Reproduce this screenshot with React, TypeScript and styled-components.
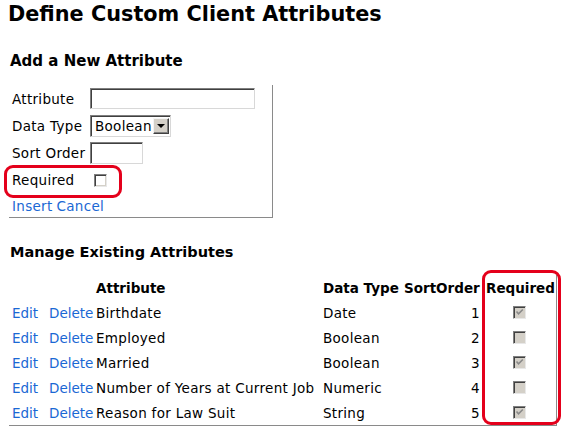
import React from "react";
import styled, { createGlobalStyle } from "styled-components";

const Global = createGlobalStyle`
  html, body { margin: 0; padding: 0; background: #fff; }
  body { font-family: "DejaVu Sans", Verdana, sans-serif; font-size: 13.5px; letter-spacing: 0.3px; color: #000; }
`;

const Page = styled.div`
  padding: 0 0 0 9px;
  width: 566px;
  height: 429px;
  box-sizing: border-box;
  overflow: hidden;
`;

const Title = styled.h1`
  margin: 0 0 0 -1px;
  padding-top: 2px;
  font-size: 20.8px;
  line-height: 24px;
  font-weight: bold;
  letter-spacing: 0;
`;

const SubTitle = styled.h3<{ $size: number; $top: number }>`
  margin: ${(p) => p.$top}px 0 0 1px;
  font-size: ${(p) => p.$size}px;
  line-height: 18px;
  font-weight: bold;
  letter-spacing: 0;
`;

const FormBox = styled.div`
  position: relative;
  margin-top: 15px;
  width: 264px;
  box-sizing: border-box;
  border-right: 1px solid #8a8a8a;
  border-bottom: 1px solid #8a8a8a;
  display: flex;
  flex-direction: column;
`;

const FormRow = styled.div<{ $h: number }>`
  display: flex;
  align-items: center;
  height: ${(p) => p.$h}px;
`;

const Label = styled.span`
  width: 78px;
  padding-left: 3px;
  white-space: nowrap;
`;

const TextBox = styled.div<{ $w: number; $h: number }>`
  width: ${(p) => p.$w}px;
  height: ${(p) => p.$h}px;
  box-sizing: border-box;
  background: #fff;
  border-style: solid;
  border-width: 1px;
  border-color: #7f7f7f #d8d8d8 #d8d8d8 #7f7f7f;
  box-shadow: inset 1px 1px 0 #404040;
  display: flex;
  align-items: center;
`;

const SelectText = styled.span`
  flex: 1;
  padding-left: 4px;
  color: #000;
`;

const SelectButton = styled.span`
  width: 16px;
  height: 16px;
  margin-right: 1px;
  box-sizing: border-box;
  background: #d4d0c8;
  border-style: solid;
  border-width: 1px;
  border-color: #f4f4f4 #404040 #404040 #f4f4f4;
  box-shadow: inset -1px -1px 0 #808080;
  display: flex;
  align-items: center;
  justify-content: center;
  &::after {
    content: "";
    border-left: 4px solid transparent;
    border-right: 4px solid transparent;
    border-top: 4px solid #000;
    margin-top: 1px;
  }
`;

const Box = styled.span<{ $disabled?: boolean }>`
  display: inline-flex;
  align-items: center;
  justify-content: center;
  width: 13px;
  height: 13px;
  box-sizing: border-box;
  background: ${(p) => (p.$disabled ? "#d4d0c8" : "#fff")};
  border-style: solid;
  border-width: 1px;
  border-color: #808080 #e8e8e8 #e8e8e8 #808080;
  box-shadow: inset 1px 1px 0 #404040, inset -1px -1px 0 #d4d0c8;
`;

const Link = styled.a<{ $tight?: boolean }>`
  color: #1a68d4;
  text-decoration: none;
  cursor: pointer;
  letter-spacing: ${(p) => (p.$tight ? "0" : "0.3px")};
`;

const LinkRow = styled.div`
  padding-left: 3px;
  display: flex;
  gap: 4px;
`;

const Highlight = styled.div<{ $l: number; $t: number; $w: number; $h: number }>`
  position: absolute;
  left: ${(p) => p.$l}px;
  top: ${(p) => p.$t}px;
  width: ${(p) => p.$w}px;
  height: ${(p) => p.$h}px;
  box-sizing: border-box;
  border: 3px solid #e4001b;
  border-radius: 9px;
  pointer-events: none;
`;

const Grid = styled.div`
  position: relative;
  margin-top: 14px;
  width: 548px;
  box-sizing: border-box;
  border-right: 1px solid #8a8a8a;
  border-bottom: 1px solid #8a8a8a;
  display: grid;
  grid-template-columns: 37px 47px 227px 81px 82px 73px;
  grid-auto-rows: 25px;
`;

const Cell = styled.div<{ $align?: string; $bold?: boolean }>`
  padding: 0 3px;
  display: flex;
  align-items: center;
  justify-content: ${(p) => p.$align || "flex-start"};
  white-space: nowrap;
  font-weight: ${(p) => (p.$bold ? "bold" : "normal")};
  letter-spacing: ${(p) => (p.$bold ? "0" : "0.3px")};
`;

const CheckMark = () => (
  <svg width="9" height="9" viewBox="0 0 9 9">
    <path d="M1.5 3.5 L3.5 5.8 L7.8 1.5" fill="none" stroke="#8a8a8a" strokeWidth="1.6" />
  </svg>
);

const rows = [
  { name: "Birthdate", type: "Date", order: 1, req: true },
  { name: "Employed", type: "Boolean", order: 2, req: false },
  { name: "Married", type: "Boolean", order: 3, req: true },
  { name: "Number of Years at Current Job", type: "Numeric", order: 4, req: false },
  { name: "Reason for Law Suit", type: "String", order: 5, req: true },
];

export default function App() {
  return (
    <Page>
      <Global />
      <Title>Define Custom Client Attributes</Title>
      <SubTitle $size={15} $top={26}>Add a New Attribute</SubTitle>
      <FormBox>
        <FormRow $h={27}>
          <Label>Attribute</Label>
          <TextBox $w={165} $h={21} />
        </FormRow>
        <FormRow $h={27}>
          <Label>Data Type</Label>
          <TextBox $w={81} $h={22}>
            <SelectText>Boolean</SelectText>
            <SelectButton />
          </TextBox>
        </FormRow>
        <FormRow $h={27}>
          <Label>Sort Order</Label>
          <TextBox $w={53} $h={22} />
        </FormRow>
        <FormRow $h={28}>
          <Label>Required</Label>
          <Box style={{ marginLeft: 4 }} />
        </FormRow>
        <FormRow $h={23}>
          <LinkRow>
            <Link>Insert</Link>
            <Link>Cancel</Link>
          </LinkRow>
        </FormRow>
        <Highlight $l={-5} $t={80} $w={118} $h={33} />
      </FormBox>
      <SubTitle $size={14.5} $top={25}>Manage Existing Attributes</SubTitle>
      <Grid>
        <Cell />
        <Cell />
        <Cell $bold>Attribute</Cell>
        <Cell $bold>Data Type</Cell>
        <Cell $bold>SortOrder</Cell>
        <Cell $bold>Required</Cell>
        {rows.map((r) => (
          <React.Fragment key={r.name}>
            <Cell><Link $tight>Edit</Link></Cell>
            <Cell><Link $tight>Delete</Link></Cell>
            <Cell>{r.name}</Cell>
            <Cell>{r.type}</Cell>
            <Cell $align="flex-end">{r.order}</Cell>
            <Cell $align="center">
              <Box $disabled>{r.req && <CheckMark />}</Box>
            </Cell>
          </React.Fragment>
        ))}
        <Highlight $l={473} $t={-5} $w={79} $h={155} />
      </Grid>
    </Page>
  );
}
